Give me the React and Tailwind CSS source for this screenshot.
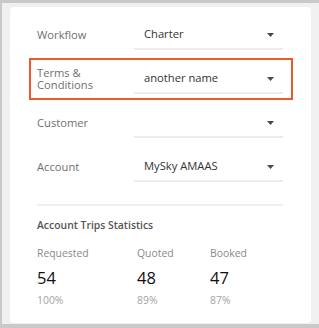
import React from 'react';

const Caret = () => (
  <svg width="7" height="4" viewBox="0 0 7 4" className="shrink-0">
    <path d="M0 0 H7 L3.5 4 Z" fill="#4a4a4a" />
  </svg>
);

const FieldRow = ({ label, value, highlighted }) => (
  <div
    className={`flex items-center h-[42px] border-2 pl-[6px] pr-[8px] ${
      highlighted ? 'border-[#ec5a2c]' : 'border-transparent'
    }`}
  >
    <div className="w-[97px] shrink-0 text-[11.2px] leading-[12px] text-[#707070]">{label}</div>
    <div className="flex-1 flex items-center justify-between h-[28px] border-b-2 border-[#ececec] pl-[10px] pr-[9px] mt-[1px]">
      <span className="text-[11.2px] text-[#333333]">{value}</span>
      <Caret />
    </div>
  </div>
);

const Stat = ({ label, value, pct, width }) => (
  <div className={width}>
    <div className="text-[10.4px] text-[#8a8a8a] leading-[14px]">{label}</div>
    <div className="text-[16.5px] text-[#111111] leading-[20px] mt-[8px]">{value}</div>
    <div className="text-[10.4px] text-[#a3a3a3] leading-[14px] mt-[5px]">{pct}</div>
  </div>
);

export default function App() {
  const fields = [
    { label: 'Workflow', value: 'Charter' },
    { label: 'Terms & Conditions', value: 'another name', highlighted: true },
    { label: 'Customer', value: '' },
    { label: 'Account', value: 'MySky AMAAS' },
  ];

  return (
    <div
      className="w-[319px] h-[328px] box-border flex flex-col bg-[#f0f0f0] border-l-2 border-t-[3px] border-b-[4px] border-[#c9c9c9] pl-[8px] pr-[8px] pt-[4px] pb-[1px]"
      style={{ fontFamily: '"Open Sans", "Liberation Sans", sans-serif' }}
    >
      <div className="flex-1 bg-white rounded-[4px] pt-[7px] pl-[19px] pr-[18px]">
        <div className="flex flex-col gap-[2px]">
          {fields.map((f) => (
            <FieldRow key={f.label} {...f} />
          ))}
        </div>
        <div className="ml-[8px] mr-[10px] mt-[16px] border-t-2 border-[#efefef]" />
        <div className="ml-[8px] mt-[12px]">
          <div className="text-[10.4px] font-semibold text-[#555555] leading-[14px]">Account Trips Statistics</div>
          <div className="flex mt-[14px]">
            <Stat label="Requested" value="54" pct="100%" width="w-[100px]" />
            <Stat label="Quoted" value="48" pct="89%" width="w-[73px]" />
            <Stat label="Booked" value="47" pct="87%" width="w-[73px]" />
          </div>
        </div>
      </div>
    </div>
  );
}
